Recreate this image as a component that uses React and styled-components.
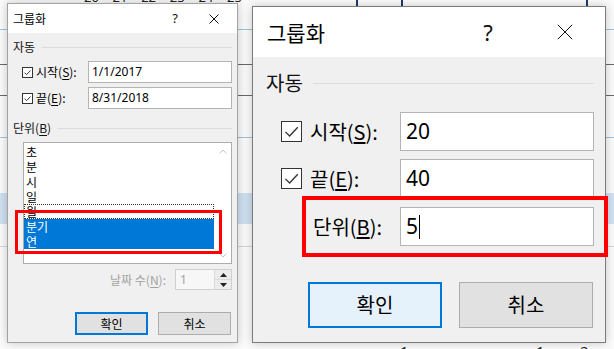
import React from 'react';
import styled, {createGlobalStyle} from 'styled-components';

const GlobalStyle = createGlobalStyle`
    html, body {
        margin: 0;
        padding: 0;
    }
    body {
        width: 614px;
        height: 349px;
        overflow: hidden;
        font-family: "Noto Sans", "Noto Sans CJK KR", sans-serif;
        color: #000;
    }
`;

const pick = (small, big) => p => (p.$big ? big : small);

const Desktop = styled.div`
    position: relative;
    width: 614px;
    height: 349px;
    overflow: hidden;
`;

const Sheet = styled.div`
    position: absolute;
    inset: 0;
    background:
        linear-gradient(#1f3a60, #1f3a60) 356px 0 / 2px 6px no-repeat,
        linear-gradient(#1f3a60, #1f3a60) 401px 0 / 2px 6px no-repeat,
        linear-gradient(#1f3a60, #1f3a60) 586px 0 / 2px 6px no-repeat,
        linear-gradient(#6a6a6a, #6a6a6a) 0 64px / 100% 1px no-repeat,
        linear-gradient(#6a6a6a, #6a6a6a) 0 95px / 100% 1px no-repeat,
        linear-gradient(#cfe0f1, #cfe0f1) 0 193px / 100% 31px no-repeat,
        linear-gradient(#9cc3e5, #9cc3e5) 0 29px / 100% 1px no-repeat,
        linear-gradient(#9cc3e5, #9cc3e5) 0 137px / 100% 1px no-repeat,
        repeating-linear-gradient(to bottom, transparent 0 246px, #d6d6d6 246px 247px, transparent 247px 268px),
        #fbfbfb;
`;

const HeaderNumbers = styled.div`
    position: absolute;
    top: -10px;
    left: 84px;
    display: flex;
    font-size: 13px;
    line-height: 14px;
    color: #222;
`;

const HeaderNumber = styled.span`
    width: 28.6px;
`;

const FooterMark = styled.span`
    position: absolute;
    top: 343px;
    font-size: 15px;
    line-height: 16px;
    color: #222;
`;

const WindowRow = styled.div`
    position: relative;
    display: flex;
    align-items: flex-start;
    gap: 14px;
    padding-left: 7px;
`;

const Window = styled.div`
    position: relative;
    box-sizing: border-box;
    width: ${pick('231px', '354px')};
    height: ${pick('340px', '337px')};
    margin-top: ${pick('3px', '6px')};
    border: 1px solid ${pick('#a3a3a3', '#7c7c7c')};
    background: #f0f0f0;
    display: flex;
    flex-direction: column;
    box-shadow: 0 0 9px rgba(0, 0, 0, 0.22);
`;

const TitleBar = styled.div`
    height: ${pick('29px', '50px')};
    flex-shrink: 0;
    background: #fff;
    display: flex;
    align-items: center;
`;

const Title = styled.div`
    flex: 1;
    padding-left: ${pick('5px', '14px')};
    font-size: ${pick('12px', '21px')};
    line-height: 1;
    font-family: "Noto Sans CJK KR", sans-serif;
`;

const HelpButton = styled.div`
    width: ${pick('32px', '74px')};
    text-align: center;
    font-size: ${pick('13px', '22px')};
    line-height: 1;
    color: #111;
`;

const CloseButton = styled.div`
    width: ${pick('46px', '80px')};
    display: flex;
    justify-content: center;
    align-items: center;
`;

const Body = styled.div`
    flex: 1;
    display: flex;
    flex-direction: column;
    padding: ${pick('0 5px 0 5px', '0 11px 0 13px')};
`;

const GroupHeader = styled.div`
    display: flex;
    align-items: center;
    height: ${pick('16px', '28px')};
    margin-top: ${p => p.$top}px;
    font-size: ${pick('12px', '20px')};
    line-height: 1;
    font-family: "Noto Sans CJK KR", sans-serif;
    color: #111;

    &::after {
        content: "";
        flex: 1;
        height: 1px;
        margin-left: ${pick('6px', '10px')};
        background: #dcdcdc;
    }
`;

const FieldRow = styled.div`
    display: flex;
    align-items: center;
    height: ${pick('22px', '39px')};
    margin-top: ${p => p.$top}px;
`;

const FieldLabel = styled.label`
    display: flex;
    align-items: center;
    box-sizing: border-box;
    width: ${pick('75px', '134px')};
    padding-left: ${p => p.$indent}px;
    gap: ${pick('3px', '8px')};
    font-size: ${pick('12px', '20px')};
    line-height: 1;
    white-space: nowrap;
`;

const LabelText = styled.span`
    font-family: "Noto Sans CJK KR", sans-serif;
`;

const Key = styled.span`
    text-decoration: underline;
    text-underline-offset: 2px;
`;

const Box = styled.span`
    box-sizing: border-box;
    width: ${pick('11px', '21px')};
    height: ${pick('11px', '21px')};
    border: 1px solid #333;
    background: #fff;
    display: flex;
    flex-shrink: 0;
`;

const TextBox = styled.div`
    flex: 1;
    align-self: stretch;
    box-sizing: border-box;
    display: flex;
    align-items: center;
    padding-left: ${pick('3px', '5px')};
    border: 1px solid #b4b4b4;
    background: #fff;
    font-size: ${pick('12px', '21px')};
    line-height: 1;
`;

const Caret = styled.span`
    width: 1px;
    height: 24px;
    margin-left: 1px;
    background: #000;
`;

const ListBox = styled.div`
    position: relative;
    box-sizing: border-box;
    height: 122px;
    margin: 6px 0 0 10px;
    border: 1px solid #adadad;
    background: #fff;
    display: flex;
`;

const Items = styled.div`
    flex: 1;
    display: flex;
    flex-direction: column;
    padding-top: 1px;
`;

const Item = styled.div`
    box-sizing: border-box;
    height: 15px;
    padding-left: 1px;
    font-family: "Noto Sans CJK KR", sans-serif;
    font-size: 12px;
    line-height: 13px;
    overflow: hidden;
    color: ${p => (p.$selected ? '#fff' : '#000')};
    background: ${p => (p.$selected ? '#0078d7' : 'transparent')};
    border: 1px ${p => (p.$focus ? 'dotted #333' : 'solid transparent')};
`;

const ScrollBar = styled.div`
    width: 17px;
    display: flex;
    flex-direction: column;
    justify-content: space-between;
    align-items: center;
    padding: 6px 0 5px;
`;

const SpinRow = styled.div`
    display: flex;
    justify-content: flex-end;
    align-items: center;
    height: 21px;
    margin-top: 5px;
    gap: 9px;
`;

const DisabledLabel = styled.span`
    font-family: "Noto Sans CJK KR", sans-serif;
    font-size: 12px;
    line-height: 1;
    color: #a2a2a2;
`;

const SpinBox = styled.div`
    box-sizing: border-box;
    width: 57px;
    height: 21px;
    border: 1px solid #cfcfcf;
    display: flex;
`;

const SpinField = styled.div`
    flex: 1;
    background: #f7f7f7;
    padding-left: 4px;
    font-size: 12px;
    line-height: 19px;
    color: #a2a2a2;
`;

const SpinButtons = styled.div`
    width: 16px;
    display: flex;
    flex-direction: column;
    border-left: 1px solid #dadada;
`;

const SpinHalf = styled.div`
    flex: 1;
    display: flex;
    align-items: center;
    justify-content: center;
    background: #ececec;
    border-top: ${p => (p.$lower ? '1px solid #dadada' : 'none')};
`;

const ButtonRow = styled.div`
    display: flex;
    justify-content: flex-end;
    gap: ${pick('10px', '17px')};
    margin-top: ${pick('22px', '36px')};
    padding-right: 1px;
`;

const DialogButton = styled.button`
    box-sizing: border-box;
    width: ${pick('73px', '134px')};
    height: ${pick('23px', '46px')};
    padding: 0;
    font-family: "Noto Sans CJK KR", sans-serif;
    font-size: ${pick('12px', '20px')};
    line-height: 1;
    color: #000;
    background: ${p => (p.$big && p.$primary ? '#e5f1fb' : '#e1e1e1')};
    border: ${p => (p.$primary ? '2px solid #0078d7' : '1px solid #adadad')};
`;

const RedMark = styled.div`
    position: absolute;
    box-sizing: border-box;
    left: ${p => p.$left}px;
    top: ${p => p.$top}px;
    width: ${p => p.$width}px;
    height: ${p => p.$height}px;
    border: ${p => p.$line}px solid #ff0000;
    pointer-events: none;
`;

const CloseIcon = ({size}) => (
    <svg width={size} height={size} viewBox="0 0 10 10">
        <path d="M0.5 0.5 L9.5 9.5 M9.5 0.5 L0.5 9.5" stroke="#111" strokeWidth={10 / size} fill="none" />
    </svg>
);

const Check = ({big}) => (
    <Box $big={big}>
        <svg width="100%" height="100%" viewBox="0 0 10 10">
            <polyline points="1.8,5.2 4,7.4 8.3,2.8" fill="none" stroke="#333" strokeWidth={big ? 0.7 : 1.1} />
        </svg>
    </Box>
);

const Chevron = ({down}) => (
    <svg width="8" height="5" viewBox="0 0 8 5">
        <polyline points={down ? '0.5,0.5 4,4 7.5,0.5' : '0.5,4.5 4,1 7.5,4.5'} fill="none" stroke="#c4c4c4" strokeWidth="1" />
    </svg>
);

const Triangle = ({down}) => (
    <svg width="7" height="4" viewBox="0 0 7 4">
        <polygon points={down ? '0,0 7,0 3.5,4' : '0,4 7,4 3.5,0'} fill="#222" />
    </svg>
);

const Header = ({big, children}) => (
    <TitleBar $big={big}>
        <Title $big={big}>{children}</Title>
        <HelpButton $big={big}>?</HelpButton>
        <CloseButton $big={big}><CloseIcon size={big ? 16 : 10} /></CloseButton>
    </TitleBar>
);

const units = ['초', '분', '시', '일', '월', '분기', '연'];

const DateDialog = () => (
    <Window>
        <Header>그룹화</Header>
        <Body>
            <GroupHeader $top={6}>자동</GroupHeader>
            <FieldRow $top={6}>
                <FieldLabel $indent={9}><Check /><LabelText>시작(<Key>S</Key>):</LabelText></FieldLabel>
                <TextBox>1/1/2017</TextBox>
            </FieldRow>
            <FieldRow $top={4}>
                <FieldLabel $indent={9}><Check /><LabelText>끝(<Key>E</Key>):</LabelText></FieldLabel>
                <TextBox>8/31/2018</TextBox>
            </FieldRow>
            <GroupHeader $top={11}><span>단위(<Key>B</Key>)</span></GroupHeader>
            <ListBox>
                <Items>
                    {units.map(u => (
                        <Item key={u} $focus={u === '월'} $selected={u === '분기' || u === '연'}>{u}</Item>
                    ))}
                </Items>
                <ScrollBar>
                    <Chevron />
                    <Chevron down />
                </ScrollBar>
            </ListBox>
            <SpinRow>
                <DisabledLabel>날짜 수(<Key>N</Key>):</DisabledLabel>
                <SpinBox>
                    <SpinField>1</SpinField>
                    <SpinButtons>
                        <SpinHalf><Triangle /></SpinHalf>
                        <SpinHalf $lower><Triangle down /></SpinHalf>
                    </SpinButtons>
                </SpinBox>
            </SpinRow>
            <ButtonRow>
                <DialogButton $primary>확인</DialogButton>
                <DialogButton>취소</DialogButton>
            </ButtonRow>
        </Body>
        <RedMark $left={7} $top={206} $width={207} $height={44} $line={3} />
    </Window>
);

const NumberDialog = () => (
    <Window $big>
        <Header big>그룹화</Header>
        <Body $big>
            <GroupHeader $big $top={12}>자동</GroupHeader>
            <FieldRow $big $top={15}>
                <FieldLabel $big $indent={15}><Check big /><LabelText>시작(<Key>S</Key>):</LabelText></FieldLabel>
                <TextBox $big>20</TextBox>
            </FieldRow>
            <FieldRow $big $top={8}>
                <FieldLabel $big $indent={15}><Check big /><LabelText>끝(<Key>E</Key>):</LabelText></FieldLabel>
                <TextBox $big>40</TextBox>
            </FieldRow>
            <FieldRow $big $top={9}>
                <FieldLabel $big $indent={47}><LabelText>단위(<Key>B</Key>):</LabelText></FieldLabel>
                <TextBox $big>5<Caret /></TextBox>
            </FieldRow>
            <ButtonRow $big>
                <DialogButton $big $primary>확인</DialogButton>
                <DialogButton $big>취소</DialogButton>
            </ButtonRow>
        </Body>
        <RedMark $left={49} $top={189} $width={306} $height={61} $line={4} />
    </Window>
);

const App = () => (
    <Desktop>
        <GlobalStyle />
        <Sheet>
            <HeaderNumbers>
                {[20, 21, 22, 23, 24, 25].map(n => <HeaderNumber key={n}>{n}</HeaderNumber>)}
            </HeaderNumbers>
            <FooterMark style={{left: 400}}>1</FooterMark>
            <FooterMark style={{left: 536}}>1</FooterMark>
            <FooterMark style={{left: 580}}>2</FooterMark>
        </Sheet>
        <WindowRow>
            <DateDialog />
            <NumberDialog />
        </WindowRow>
    </Desktop>
);

export default App;
